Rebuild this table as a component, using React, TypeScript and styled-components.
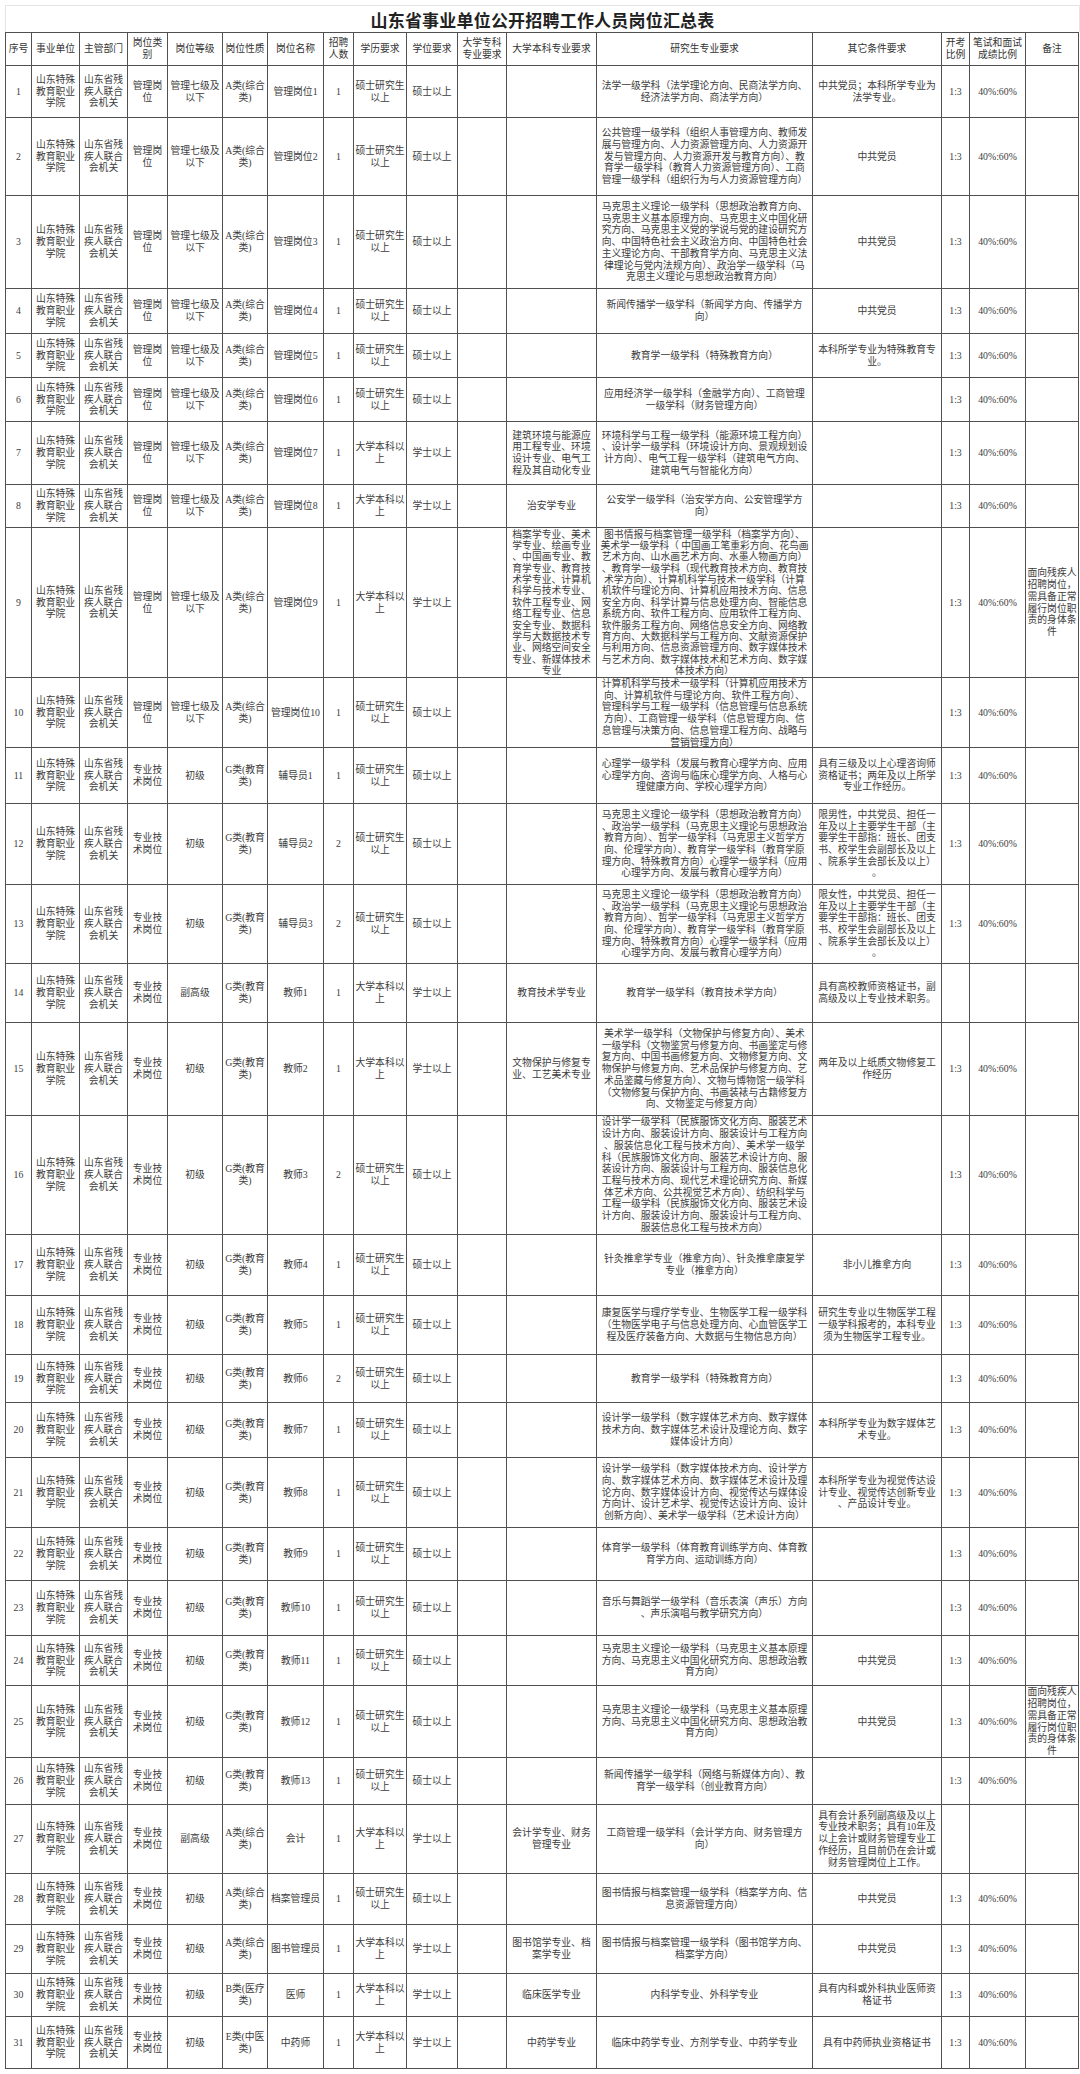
import React from 'react';
import styled, { createGlobalStyle } from 'styled-components';

const GlobalStyle = createGlobalStyle`
  html, body {
    margin: 0;
    padding: 0;
    background: #fff;
  }
  body {
    font-family: "Liberation Serif", "Noto Sans CJK SC", serif;
    color: #3a3a3a;
  }
`;

// column widths / row heights measured off the reference (1px grid lines between)
const COLS = [25, 47, 47, 39, 54, 44, 55, 29, 52, 50, 48, 89, 215, 128, 27, 55, 52];
const HEIGHTS = [
  32, 51, 77, 92, 44, 43, 43, 62, 42, 149, 69, 55, 80, 78, 58, 92, 118, 60, 58, 47, 54, 69, 52,
  54, 49, 71, 46, 68, 50, 48, 42, 51,
];

const Page = styled.div`
  padding: 5px 0 0 5px;
  width: 1075px;
`;

const TitleBar = styled.div`
  height: 26px;
  border: 1px solid #e4e4e4;
  border-bottom: none;
  display: flex;
  align-items: center;
  justify-content: center;
  font-family: "Noto Sans CJK SC", sans-serif;
  font-size: 17px;
  font-weight: 700;
  color: #222;
  letter-spacing: 0.2px;
`;

const Grid = styled.div`
  display: grid;
  grid-template-columns: ${COLS.map((c) => `${c}px`).join(' ')};
  grid-template-rows: ${HEIGHTS.map((h) => `${h}px`).join(' ')};
  gap: 1px;
  padding: 1px;
  background: #505050;
  width: fit-content;
`;

const Cell = styled.div<{ $head?: boolean; $tight?: boolean }>`
  background: #fff;
  display: flex;
  align-items: safe center;
  justify-content: center;
  overflow: hidden;
  white-space: pre;
  text-align: center;
  font-size: 9.8px;
  line-height: ${(p) => (p.$tight ? '11.35px' : '11.7px')};
  padding: 0 2px;
  color: ${(p) => (p.$head ? '#333' : '#3c3c3c')};
`;

const HEAD = [
  '序号',
  '事业单位',
  '主管部门',
  '岗位类\n别',
  '岗位等级',
  '岗位性质',
  '岗位名称',
  '招聘\n人数',
  '学历要求',
  '学位要求',
  '大学专科\n专业要求',
  '大学本科专业要求',
  '研究生专业要求',
  '其它条件要求',
  '开考\n比例',
  '笔试和面试\n成绩比例',
  '备注',
];

const UNIT = '山东特殊\n教育职业\n学院';
const DEPT = '山东省残\n疾人联合\n会机关';
const NOTE = '面向残疾人\n招聘岗位，\n需具备正常\n履行岗位职\n责的身体条\n件';
const PARTY = '中共党员';

const MARX_EDU =
  '马克思主义理论一级学科（思想政治教育方向）\n、政治学一级学科（马克思主义理论与思想政治\n教育方向）、哲学一级学科（马克思主义哲学方\n向、伦理学方向）、教育学一级学科（教育学原\n理方向、特殊教育方向）心理学一级学科（应用\n心理学方向、发展与教育心理学方向）';
const MARX_BASE =
  '马克思主义理论一级学科（马克思主义基本原理\n方向、马克思主义中国化研究方向、思想政治教\n育方向）';
const CADRE =
  '年及以上主要学生干部（主\n要学生干部指：班长、团支\n书、校学生会副部长及以上\n、院系学生会部长及以上）\n。';

type Job = {
  kind: 'm' | 'p';
  level: string;
  nature: string;
  name: string;
  count: string;
  master: boolean;
  ben?: string;
  yan: string;
  other?: string;
  exam?: boolean;
  note?: string;
};

const mgr = (name: string, master: boolean, yan: string, other = '', ben = ''): Job => ({
  kind: 'm',
  level: '管理七级及\n以下',
  nature: 'A类(综合\n类)',
  name,
  count: '1',
  master,
  ben,
  yan,
  other,
});

const G = 'G类(教育\n类)';
const A = 'A类(综合\n类)';

const JOBS: Job[] = [
  mgr('管理岗位1', true, '法学一级学科（法学理论方向、民商法学方向、\n经济法学方向、商法学方向）', '中共党员；本科所学专业为\n法学专业。'),
  mgr(
    '管理岗位2',
    true,
    '公共管理一级学科（组织人事管理方向、教师发\n展与管理方向、人力资源管理方向、人力资源开\n发与管理方向、人力资源开发与教育方向）、教\n育学一级学科（教育人力资源管理方向）、工商\n管理一级学科（组织行为与人力资源管理方向）',
    PARTY
  ),
  mgr(
    '管理岗位3',
    true,
    '马克思主义理论一级学科（思想政治教育方向、\n马克思主义基本原理方向、马克思主义中国化研\n究方向、马克思主义党的学说与党的建设研究方\n向、中国特色社会主义政治方向、中国特色社会\n主义理论方向、干部教育学方向、马克思主义法\n律理论与党内法规方向）、政治学一级学科（马\n克思主义理论与思想政治教育方向）',
    PARTY
  ),
  mgr('管理岗位4', true, '新闻传播学一级学科（新闻学方向、传播学方\n向）', PARTY),
  mgr('管理岗位5', true, '教育学一级学科（特殊教育方向）', '本科所学专业为特殊教育专\n业。'),
  mgr('管理岗位6', true, '应用经济学一级学科（金融学方向）、工商管理\n一级学科（财务管理方向）'),
  mgr(
    '管理岗位7',
    false,
    '环境科学与工程一级学科（能源环境工程方向）\n、设计学一级学科（环境设计方向、景观规划设\n计方向）、电气工程一级学科（建筑电气方向、\n建筑电气与智能化方向）',
    '',
    '建筑环境与能源应\n用工程专业、环境\n设计专业、电气工\n程及其自动化专业'
  ),
  mgr('管理岗位8', false, '公安学一级学科（治安学方向、公安管理学方\n向）', '', '治安学专业'),
  {
    ...mgr(
      '管理岗位9',
      false,
      '图书情报与档案管理一级学科（档案学方向）、\n美术学一级学科（ 中国画工笔重彩方向、花鸟画\n艺术方向、山水画艺术方向、水墨人物画方向）\n、教育学一级学科（现代教育技术方向、教育技\n术学方向）、计算机科学与技术一级学科（计算\n机软件与理论方向、计算机应用技术方向、信息\n安全方向、科学计算与信息处理方向、智能信息\n系统方向、软件工程方向、应用软件工程方向、\n软件服务工程方向、网络信息安全方向、网络教\n育方向、大数据科学与工程方向、文献资源保护\n与利用方向、信息资源管理方向、数字媒体技术\n与艺术方向、数字媒体技术和艺术方向、数字媒\n体技术方向）',
      '',
      '档案学专业、美术\n学专业、绘画专业\n、中国画专业、教\n育学专业、教育技\n术学专业、计算机\n科学与技术专业、\n软件工程专业、网\n络工程专业、信息\n安全专业、数据科\n学与大数据技术专\n业、网络空间安全\n专业、新媒体技术\n专业'
    ),
    note: NOTE,
  },
  mgr(
    '管理岗位10',
    true,
    '计算机科学与技术一级学科（计算机应用技术方\n向、计算机软件与理论方向、软件工程方向）、\n管理科学与工程一级学科（信息管理与信息系统\n方向）、工商管理一级学科（信息管理方向、信\n息管理与决策方向、信息管理工程方向、战略与\n营销管理方向）'
  ),
  {
    kind: 'p', level: '初级', nature: G, name: '辅导员1', count: '1', master: true,
    yan: '心理学一级学科（发展与教育心理学方向、应用\n心理学方向、咨询与临床心理学方向、人格与心\n理健康方向、学校心理学方向）',
    other: '具有三级及以上心理咨询师\n资格证书；两年及以上所学\n专业工作经历。',
  },
  { kind: 'p', level: '初级', nature: G, name: '辅导员2', count: '2', master: true, yan: MARX_EDU, other: '限男性，中共党员、担任一\n' + CADRE },
  { kind: 'p', level: '初级', nature: G, name: '辅导员3', count: '2', master: true, yan: MARX_EDU, other: '限女性，中共党员、担任一\n' + CADRE },
  {
    kind: 'p', level: '副高级', nature: G, name: '教师1', count: '1', master: false, ben: '教育技术学专业',
    yan: '教育学一级学科（教育技术学方向）', other: '具有高校教师资格证书，副\n高级及以上专业技术职务。', exam: false,
  },
  {
    kind: 'p', level: '初级', nature: G, name: '教师2', count: '1', master: false, ben: '文物保护与修复专\n业、工艺美术专业',
    yan: '美术学一级学科（文物保护与修复方向）、美术\n一级学科（文物鉴赏与修复方向、书画鉴定与修\n复方向、中国书画修复方向、文物修复方向、文\n物保护与修复方向、艺术品保护与修复方向、艺\n术品鉴藏与修复方向）、文物与博物馆一级学科\n（文物修复与保护方向、书画装裱与古籍修复方\n向、文物鉴定与修复方向）',
    other: '两年及以上纸质文物修复工\n作经历',
  },
  {
    kind: 'p', level: '初级', nature: G, name: '教师3', count: '2', master: true,
    yan: '设计学一级学科（民族服饰文化方向、服装艺术\n设计方向、服装设计方向、服装设计与工程方向\n、服装信息化工程与技术方向）、美术学一级学\n科（民族服饰文化方向、服装艺术设计方向、服\n装设计方向、服装设计与工程方向、服装信息化\n工程与技术方向、现代艺术理论研究方向、新媒\n体艺术方向、公共视觉艺术方向）、纺织科学与\n工程一级学科（民族服饰文化方向、服装艺术设\n计方向、服装设计方向、服装设计与工程方向、\n服装信息化工程与技术方向）',
  },
  {
    kind: 'p', level: '初级', nature: G, name: '教师4', count: '1', master: true,
    yan: '针灸推拿学专业（推拿方向）、针灸推拿康复学\n专业（推拿方向）', other: '非小儿推拿方向',
  },
  {
    kind: 'p', level: '初级', nature: G, name: '教师5', count: '1', master: true,
    yan: '康复医学与理疗学专业、生物医学工程一级学科\n（生物医学电子与信息处理方向、心血管医学工\n程及医疗装备方向、大数据与生物信息方向）',
    other: '研究生专业以生物医学工程\n一级学科报考的，本科专业\n须为生物医学工程专业。',
  },
  { kind: 'p', level: '初级', nature: G, name: '教师6', count: '2', master: true, yan: '教育学一级学科（特殊教育方向）' },
  {
    kind: 'p', level: '初级', nature: G, name: '教师7', count: '1', master: true,
    yan: '设计学一级学科（数字媒体艺术方向、数字媒体\n技术方向、数字媒体艺术设计及理论方向、数字\n媒体设计方向）',
    other: '本科所学专业为数字媒体艺\n术专业。',
  },
  {
    kind: 'p', level: '初级', nature: G, name: '教师8', count: '1', master: true,
    yan: '设计学一级学科（数字媒体技术方向、设计学方\n向、数字媒体艺术方向、数字媒体艺术设计及理\n论方向、数字媒体设计方向、视觉传达与媒体设\n方向计、设计艺术学、视觉传达设计方向、设计\n创新方向）、美术学一级学科（艺术设计方向）',
    other: '本科所学专业为视觉传达设\n计专业、视觉传达创新专业\n、产品设计专业。',
  },
  {
    kind: 'p', level: '初级', nature: G, name: '教师9', count: '1', master: true,
    yan: '体育学一级学科（体育教育训练学方向、体育教\n育学方向、运动训练方向）',
  },
  {
    kind: 'p', level: '初级', nature: G, name: '教师10', count: '1', master: true,
    yan: '音乐与舞蹈学一级学科（音乐表演（声乐）方向\n、声乐演唱与教学研究方向）',
  },
  { kind: 'p', level: '初级', nature: G, name: '教师11', count: '1', master: true, yan: MARX_BASE, other: PARTY },
  { kind: 'p', level: '初级', nature: G, name: '教师12', count: '1', master: true, yan: MARX_BASE, other: PARTY, note: NOTE },
  {
    kind: 'p', level: '初级', nature: G, name: '教师13', count: '1', master: true,
    yan: '新闻传播学一级学科（网络与新媒体方向）、教\n育学一级学科（创业教育方向）',
  },
  {
    kind: 'p', level: '副高级', nature: A, name: '会计', count: '1', master: false, ben: '会计学专业、财务\n管理专业',
    yan: '工商管理一级学科（会计学方向、财务管理方\n向）',
    other: '具有会计系列副高级及以上\n专业技术职务；具有10年及\n以上会计或财务管理专业工\n作经历，且目前仍在会计或\n财务管理岗位上工作。',
    exam: false,
  },
  {
    kind: 'p', level: '初级', nature: A, name: '档案管理员', count: '1', master: true,
    yan: '图书情报与档案管理一级学科（档案学方向、信\n息资源管理方向）', other: PARTY,
  },
  {
    kind: 'p', level: '初级', nature: A, name: '图书管理员', count: '1', master: false, ben: '图书馆学专业、档\n案学专业',
    yan: '图书情报与档案管理一级学科（图书馆学方向、\n档案学方向）', other: PARTY,
  },
  {
    kind: 'p', level: '初级', nature: 'B类(医疗\n类)', name: '医师', count: '1', master: false, ben: '临床医学专业',
    yan: '内科学专业、外科学专业', other: '具有内科或外科执业医师资\n格证书',
  },
  {
    kind: 'p', level: '初级', nature: 'E类(中医\n类)', name: '中药师', count: '1', master: false, ben: '中药学专业',
    yan: '临床中药学专业、方剂学专业、中药学专业', other: '具有中药师执业资格证书',
  },
];

const rowCells = (job: Job, i: number): string[] => {
  const exam = job.exam !== false;
  return [
    String(i + 1),
    UNIT,
    DEPT,
    job.kind === 'm' ? '管理岗\n位' : '专业技\n术岗位',
    job.level,
    job.nature,
    job.name,
    job.count,
    job.master ? '硕士研究生\n以上' : '大学本科以\n上',
    job.master ? '硕士以上' : '学士以上',
    '',
    job.ben ?? '',
    job.yan,
    job.other ?? '',
    exam ? '1:3' : '',
    exam ? '40%:60%' : '',
    job.note ?? '',
  ];
};

// the longest cells (13 lines) get a slightly tighter leading so they fit their row
const isLong = (text: string) => text.split('\n').length > 12;

export default function App() {
  return (
    <>
      <GlobalStyle />
      <Page>
        <TitleBar>山东省事业单位公开招聘工作人员岗位汇总表</TitleBar>
        <Grid>
          {HEAD.map((h, k) => (
            <Cell key={`h${k}`} $head>
              {h}
            </Cell>
          ))}
          {JOBS.map((job, i) =>
            rowCells(job, i).map((text, k) => (
              <Cell key={`${i}-${k}`} $tight={isLong(text)}>
                {text}
              </Cell>
            ))
          )}
        </Grid>
      </Page>
    </>
  );
}
